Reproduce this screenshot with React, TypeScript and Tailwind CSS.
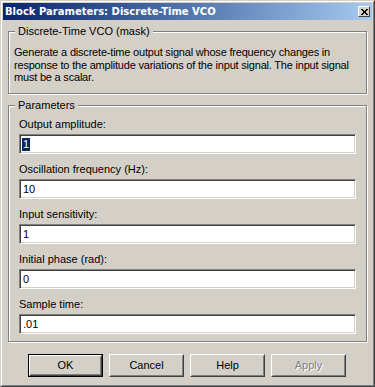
import React from "react";

const font = { fontFamily: '"Liberation Sans", Arial, sans-serif' };
const titleFont = { fontFamily: '"DejaVu Sans", Verdana, sans-serif' };

function Field({ label, value, selected }: { label: string; value: string; selected?: boolean }) {
  return (
    <div className="flex flex-col">
      <div className="h-[12px] leading-[12px] text-[11px] text-black">{label}</div>
      <div className="mt-[4px] h-[20px] bg-white border border-t-[#808080] border-l-[#808080] border-r-white border-b-white shadow-[inset_1px_1px_0_#404040,inset_-1px_-1px_0_#d4d0c8] flex items-center pl-[2px]">
        {selected ? (
          <span className="bg-[#0a246a] text-white text-[11px] leading-[13px] px-[1px]">{value}</span>
        ) : (
          <span className="text-black text-[11px] leading-[13px] pl-[1px]">{value}</span>
        )}
      </div>
    </div>
  );
}

function Btn({ children, isDefault, disabled }: { children: React.ReactNode; isDefault?: boolean; disabled?: boolean }) {
  const inner = (
    <div className="w-full h-full border border-t-white border-l-white border-r-[#404040] border-b-[#404040]">
      <div className="w-full h-full border border-t-[#d4d0c8] border-l-[#d4d0c8] border-r-[#808080] border-b-[#808080] flex items-center justify-center">
        {disabled ? (
          <span className="text-[11px] text-[#808080] [text-shadow:1px_1px_0_#ffffff]">{children}</span>
        ) : (
          <span className="text-[11px] text-black">{children}</span>
        )}
      </div>
    </div>
  );
  return isDefault ? (
    <div className="w-[75px] h-[23px] border border-black">{inner}</div>
  ) : (
    <div className="w-[75px] h-[23px]">{inner}</div>
  );
}

export default function App() {
  return (
    <div style={font} className="w-[375px] h-[387px] bg-[#d4d0c8] border border-t-[#d4d0c8] border-l-[#d4d0c8] border-r-[#404040] border-b-[#404040]">
      <div className="w-full h-full border border-t-white border-l-white border-r-[#808080] border-b-[#808080] p-[1px] flex flex-col">
        <div className="h-[17px] bg-linear-to-r from-[#0a246a] to-[#a6caf0] flex items-center justify-between pl-[2px] pr-[2px]">
          <span style={titleFont} className="text-white font-bold text-[10px] leading-[13px]">Block Parameters: Discrete-Time VCO</span>
          <div className="w-[12px] h-[11px] bg-[#d4d0c8] border border-t-white border-l-white border-r-[#404040] border-b-[#404040] flex items-center justify-center">
            <svg width="7" height="6" viewBox="0 0 7 6">
              <path d="M0 0h2v1H0zM5 0h2v1H5zM1 1h2v1H1zM4 1h2v1H4zM2 2h3v2H2zM1 4h2v1H1zM4 4h2v1H4zM0 5h2v1H0zM5 5h2v1H5z" fill="#000" />
            </svg>
          </div>
        </div>

        <div className="relative mt-[11px] mx-[5px] h-[63px] border border-[#808080] shadow-[inset_1px_1px_0_#ffffff,1px_1px_0_#ffffff] pt-[14px] pl-[5px] pr-[4px]">
          <span className="absolute left-[6px] top-[-7px] bg-[#d4d0c8] px-[3px] text-[11px] leading-[13px] text-black">Discrete-Time VCO (mask)</span>
          <p className="text-[11px] leading-[12.5px] tracking-[-0.2px] text-black">
            Generate a discrete-time output signal whose frequency changes in response to the amplitude variations of the input signal. The input signal must be a scalar.
          </p>
        </div>

        <div className="relative mt-[11px] mx-[5px] h-[237px] border border-[#808080] shadow-[inset_1px_1px_0_#ffffff,1px_1px_0_#ffffff] pt-[12px] pl-[10px] pr-[10px] flex flex-col gap-[9px]">
          <span className="absolute left-[6px] top-[-7px] bg-[#d4d0c8] px-[3px] text-[11px] leading-[13px] text-black">Parameters</span>
          <Field label="Output amplitude:" value="1" selected />
          <Field label="Oscillation frequency (Hz):" value="10" />
          <Field label="Input sensitivity:" value="1" />
          <Field label="Initial phase (rad):" value="0" />
          <Field label="Sample time:" value=".01" />
        </div>

        <div className="mt-[12px] flex pl-[25px] gap-[6px]">
          <Btn isDefault>OK</Btn>
          <Btn>Cancel</Btn>
          <Btn>Help</Btn>
          <Btn disabled>Apply</Btn>
        </div>
      </div>
    </div>
  );
}
